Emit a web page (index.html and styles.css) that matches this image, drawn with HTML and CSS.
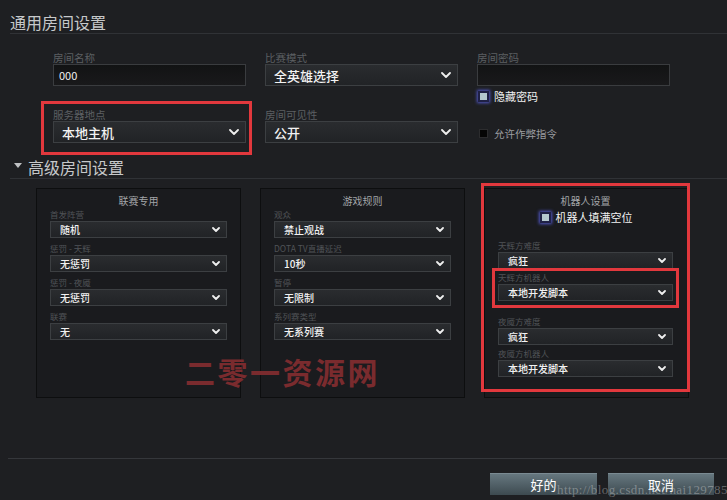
FILE: index.html
```html
<!DOCTYPE html>
<html lang="zh-CN">
<head>
<meta charset="utf-8">
<title>房间设置</title>
<link rel="stylesheet" href="styles.css">
</head>
<body>
  <h2 class="sec-title">通用房间设置</h2>
  <div class="general">
    <div class="col">
      <div class="field">
        <div class="label">房间名称</div>
        <div class="input">000</div>
      </div>
      <div class="field hl-server">
        <div class="label">服务器地点</div>
        <div class="select big"><span>本地主机</span><svg class="chev" width="10" height="6" viewBox="0 0 10 6"><path d="M1 1l4 4 4-4" /></svg></div>
      </div>
    </div>
    <div class="col">
      <div class="field">
        <div class="label">比赛模式</div>
        <div class="select big"><span>全英雄选择</span><svg class="chev" width="10" height="6" viewBox="0 0 10 6"><path d="M1 1l4 4 4-4" /></svg></div>
      </div>
      <div class="field">
        <div class="label">房间可见性</div>
        <div class="select big"><span>公开</span><svg class="chev" width="10" height="6" viewBox="0 0 10 6"><path d="M1 1l4 4 4-4" /></svg></div>
      </div>
    </div>
    <div class="col">
      <div class="field">
        <div class="label">房间密码</div>
        <div class="input"></div>
      </div>
      <div class="check pw"><span class="box on"></span><span>隐藏密码</span></div>
      <div class="check cheat"><span class="box off"></span><span>允许作弊指令</span></div>
    </div>
  </div>

  <h2 class="sec-title adv"><span class="tri"></span>高级房间设置</h2>

  <div class="panels">
    <section class="panel">
      <div class="panel-title">联赛专用</div>
      <div class="fields">
        <div class="pfield"><div class="plabel">首发阵营</div><div class="select small"><span>随机</span><svg class="chev" width="8" height="5" viewBox="0 0 8 5"><path d="M1 1l3 3 3-3" /></svg></div></div>
        <div class="pfield"><div class="plabel">惩罚 - 天辉</div><div class="select small"><span>无惩罚</span><svg class="chev" width="8" height="5" viewBox="0 0 8 5"><path d="M1 1l3 3 3-3" /></svg></div></div>
        <div class="pfield"><div class="plabel">惩罚 - 夜魇</div><div class="select small"><span>无惩罚</span><svg class="chev" width="8" height="5" viewBox="0 0 8 5"><path d="M1 1l3 3 3-3" /></svg></div></div>
        <div class="pfield"><div class="plabel">联赛</div><div class="select small"><span>无</span><svg class="chev" width="8" height="5" viewBox="0 0 8 5"><path d="M1 1l3 3 3-3" /></svg></div></div>
      </div>
    </section>
    <section class="panel">
      <div class="panel-title">游戏规则</div>
      <div class="fields">
        <div class="pfield"><div class="plabel">观众</div><div class="select small"><span>禁止观战</span><svg class="chev" width="8" height="5" viewBox="0 0 8 5"><path d="M1 1l3 3 3-3" /></svg></div></div>
        <div class="pfield"><div class="plabel">DOTA TV直播延迟</div><div class="select small"><span>10秒</span><svg class="chev" width="8" height="5" viewBox="0 0 8 5"><path d="M1 1l3 3 3-3" /></svg></div></div>
        <div class="pfield"><div class="plabel">暂停</div><div class="select small"><span>无限制</span><svg class="chev" width="8" height="5" viewBox="0 0 8 5"><path d="M1 1l3 3 3-3" /></svg></div></div>
        <div class="pfield"><div class="plabel">系列赛类型</div><div class="select small"><span>无系列赛</span><svg class="chev" width="8" height="5" viewBox="0 0 8 5"><path d="M1 1l3 3 3-3" /></svg></div></div>
      </div>
    </section>
    <section class="panel bots">
      <div class="panel-title">机器人设置</div>
      <div class="bot-check"><span class="box on"></span><span>机器人填满空位</span></div>
      <div class="fields">
        <div class="pfield"><div class="plabel">天辉方难度</div><div class="select small"><span>疯狂</span><svg class="chev" width="8" height="5" viewBox="0 0 8 5"><path d="M1 1l3 3 3-3" /></svg></div></div>
        <div class="pfield hl-bot"><div class="plabel">天辉方机器人</div><div class="select small"><span>本地开发脚本</span><svg class="chev" width="8" height="5" viewBox="0 0 8 5"><path d="M1 1l3 3 3-3" /></svg></div></div>
        <div class="pfield f3"><div class="plabel">夜魇方难度</div><div class="select small"><span>疯狂</span><svg class="chev" width="8" height="5" viewBox="0 0 8 5"><path d="M1 1l3 3 3-3" /></svg></div></div>
        <div class="pfield"><div class="plabel">夜魇方机器人</div><div class="select small"><span>本地开发脚本</span><svg class="chev" width="8" height="5" viewBox="0 0 8 5"><path d="M1 1l3 3 3-3" /></svg></div></div>
      </div>
    </section>
  </div>

  <div class="footer">
    <button class="btn ok">好的</button>
    <button class="btn cancel">取消</button>
  </div>

  <div class="wm-cn">二零一资源网</div>
  <div class="wm-url">http://blog.csdn.net/hai129785</div>
</body>
</html>
```

FILE: styles.css
```css
* { box-sizing: border-box; }
html, body { margin: 0; padding: 0; }
body {
  width: 727px;
  height: 500px;
  overflow: hidden;
  position: relative;
  background: #1e1f22;
  color: #ececec;
  font-family: "Noto Sans CJK SC", "Noto Sans", sans-serif;
}

.sec-title {
  margin: 0 0 0 10px;
  height: 34px;
  padding-top: 12px;
  font-size: 16px;
  line-height: 20px;
  font-weight: 400;
  color: #c6c8ca;
  border-bottom: 1px solid #303236;
}
.sec-title.adv {
  margin-top: 2px;
  padding-left: 4px;
  display: flex;
  align-items: flex-start;
}
.tri {
  display: inline-block;
  width: 0;
  height: 0;
  border-left: 4px solid transparent;
  border-right: 4px solid transparent;
  border-top: 5px solid #bfc1c3;
  margin: 6px 6px 0 0;
}

.general {
  display: grid;
  grid-template-columns: repeat(3, 193px);
  column-gap: 19px;
  margin-top: 17px;
  padding-left: 53px;
}
.col { display: flex; flex-direction: column; }
.col .field + .field { margin-top: 22px; }
.field { position: relative; }
.label {
  font-size: 10.5px;
  line-height: 13px;
  height: 13px;
  color: #5c5f63;
  white-space: nowrap;
}
.input {
  height: 22px;
  background: linear-gradient(#121314, #19191b);
  border: 1px solid #3a3c3f;
  font-size: 11px;
  line-height: 20px;
  padding-left: 5px;
  color: #f0f0f0;
}
.select {
  display: flex;
  align-items: center;
  justify-content: space-between;
  background: linear-gradient(#2a2c2f, #212326);
  border: 1px solid #3c3f42;
  color: #f2f2f2;
  white-space: nowrap;
}
.select.big {
  height: 22px;
  padding: 0 6px 0 8px;
  font-size: 13px;
  font-weight: 500;
}
.select.small {
  height: 17px;
  padding: 0 6px 0 9px;
  font-size: 10px;
  font-weight: 500;
}
.chev path {
  fill: none;
  stroke: #eeeeee;
  stroke-width: 1.8;
  stroke-linecap: round;
  stroke-linejoin: round;
}

.hl-server::after {
  content: "";
  position: absolute;
  top: -7px;
  left: -12px;
  right: -6px;
  bottom: -12px;
  border: 3px solid #e2383d;
  pointer-events: none;
}

.check {
  display: flex;
  align-items: center;
  height: 12px;
  font-size: 11px;
  white-space: nowrap;
}
.check.pw { margin-top: 4px; color: #f0f0f0; }
.check.cheat { margin-top: 25px; color: #9b9da0; font-size: 10.5px; }
.box { display: inline-block; flex: none; }
.box.on {
  width: 11px;
  height: 11px;
  background: #b4c9cf;
  border: 2px solid #1f2146;
  box-shadow: 0 0 3px 1px #5057c4;
  margin: 0 5px 0 1px;
}
.box.off {
  width: 9px;
  height: 9px;
  background: #050505;
  border: 1px solid #2c2c2e;
  margin: 0 6px 0 2px;
}

.panels {
  display: flex;
  gap: 19px;
  margin-top: 9px;
  padding-left: 36px;
}
.panel {
  position: relative;
  width: 205px;
  height: 210px;
  background: #1a1b1e;
  border: 1px solid #0d0e0f;
  padding: 0 13px;
  display: flex;
  flex-direction: column;
}
.panel-title {
  text-align: center;
  font-size: 10px;
  line-height: 14px;
  padding-top: 5px;
  color: #a2a5a8;
}
.fields { display: flex; flex-direction: column; gap: 4px; }
.pfield { position: relative; }
.plabel {
  font-size: 8.5px;
  line-height: 13px;
  height: 13px;
  color: #505357;
  white-space: nowrap;
}

.panel.bots { padding: 0 15px 0 13px; }
.bots::after {
  content: "";
  position: absolute;
  top: -6px;
  left: -4px;
  right: -2px;
  bottom: 5px;
  border: 3px solid #e2383d;
  pointer-events: none;
}
.bot-check {
  display: flex;
  justify-content: center;
  align-items: center;
  height: 14px;
  margin-top: 2px;
  font-size: 11px;
  color: #f2f2f2;
}
.bots .fields { gap: 2px; margin-top: 15px; }
.bots .f3 { margin-top: 12px; }
.hl-bot::after {
  content: "";
  position: absolute;
  top: -3px;
  left: -6px;
  right: -6px;
  bottom: -7px;
  border: 3px solid #e2383d;
  pointer-events: none;
}

.footer {
  margin: 60px 0 0 8px;
  border-top: 1px solid #35373b;
  padding: 14px 13px 0 0;
  display: flex;
  justify-content: flex-end;
  gap: 11px;
}
.btn {
  height: 22px;
  border: 0;
  border-top: 1px solid #7a8a92;
  background: linear-gradient(#66777f, #3d4a50);
  color: #ffffff;
  font-family: inherit;
  font-size: 13px;
  line-height: 20px;
  padding: 0;
  text-align: center;
}
.btn.ok { width: 107px; }
.btn.cancel { width: 106px; }

.wm-cn {
  position: absolute;
  left: 185px;
  top: 353px;
  font-size: 30px;
  line-height: 36px;
  font-weight: 700;
  letter-spacing: 2.5px;
  color: #7a2b2e;
  white-space: nowrap;
}
.wm-url {
  position: absolute;
  left: 557px;
  top: 482px;
  font-family: "Liberation Serif", serif;
  font-size: 13px;
  letter-spacing: 0.4px;
  color: rgba(215, 215, 215, 0.4);
  white-space: nowrap;
}
```
